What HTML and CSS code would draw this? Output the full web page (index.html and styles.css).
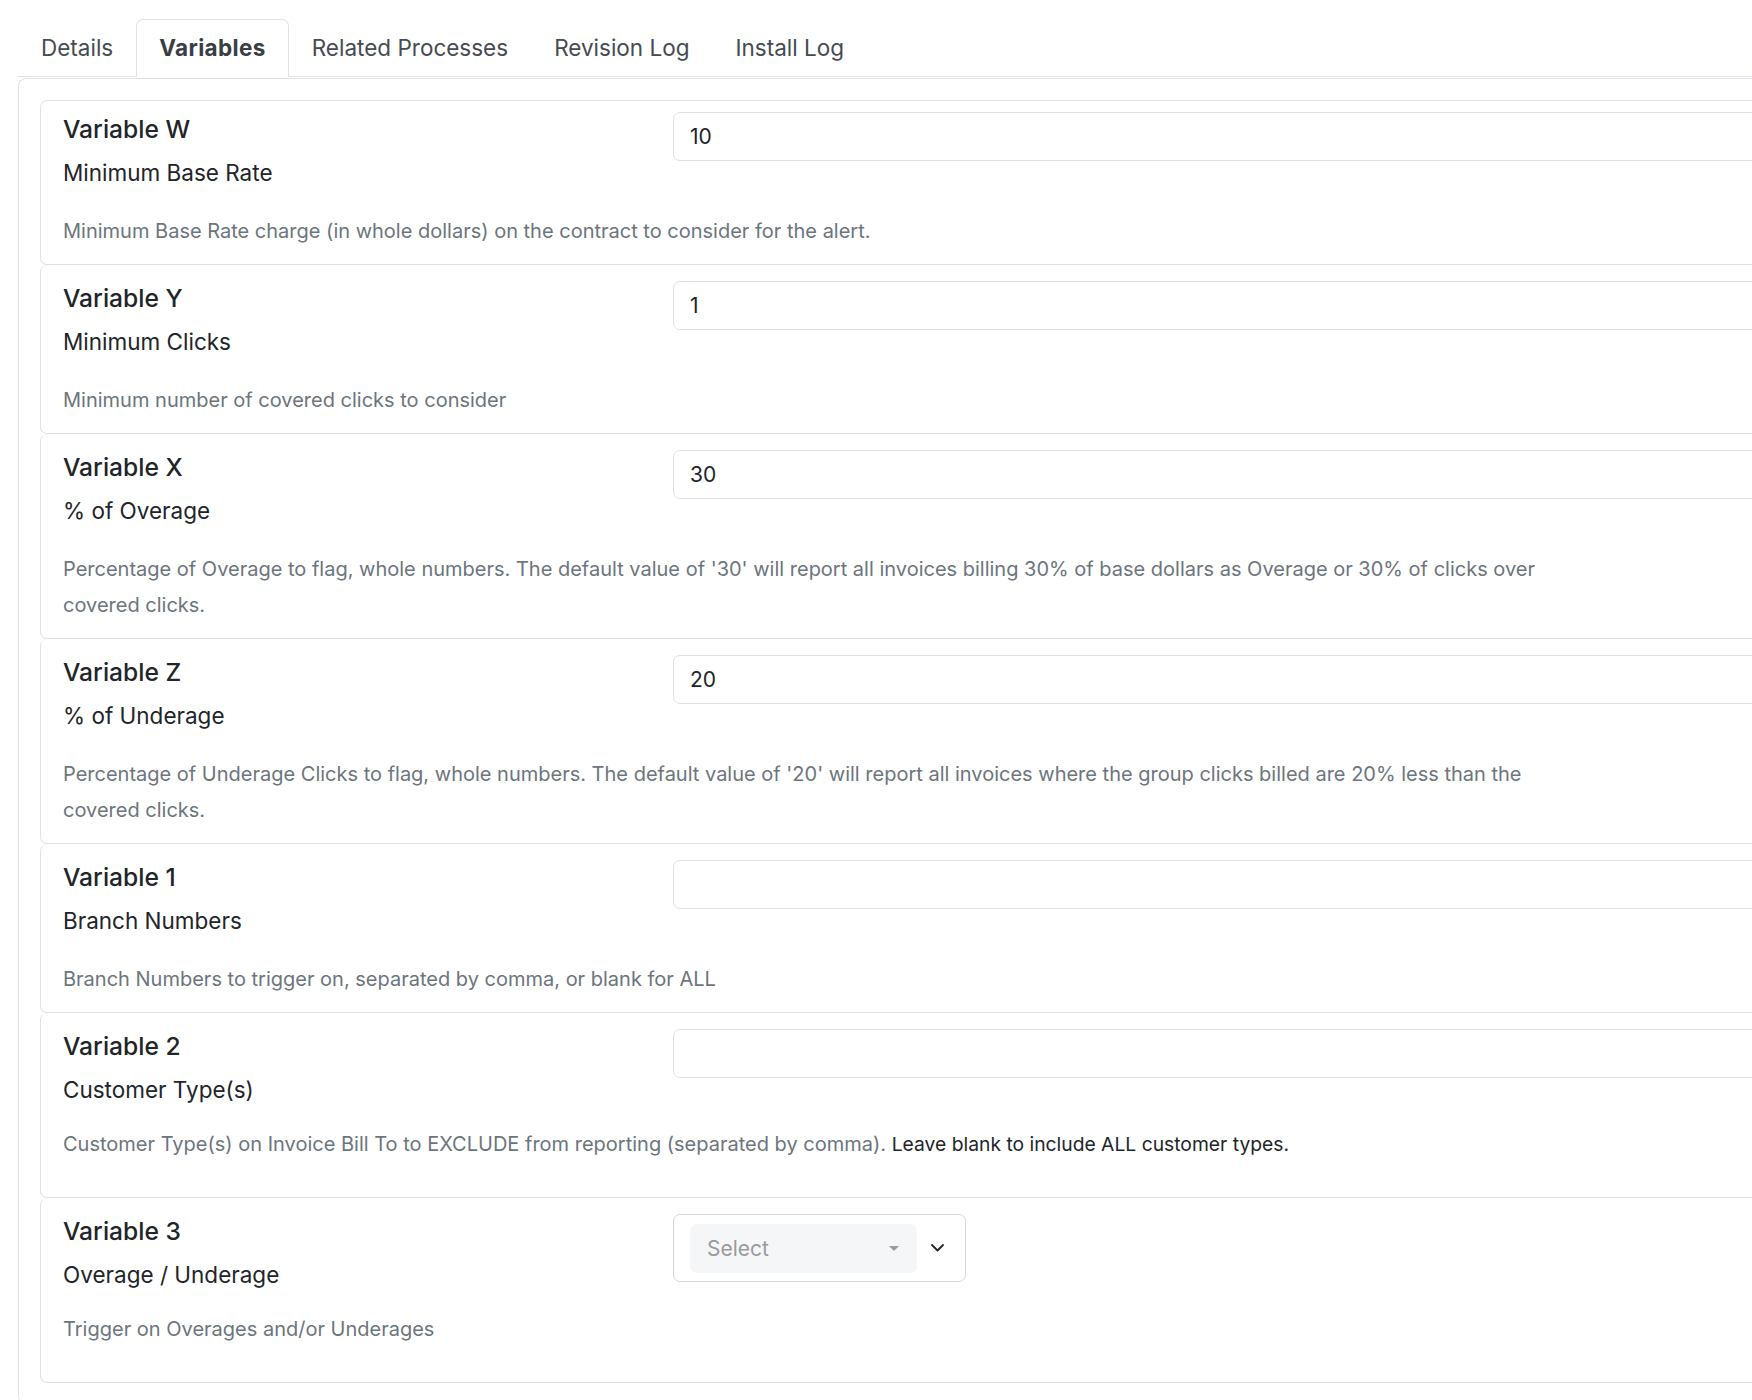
FILE: index.html
```html
<!DOCTYPE html>
<html lang="en">
<head>
<meta charset="utf-8">
<title>Variables</title>
<link rel="stylesheet" href="styles.css">
</head>
<body>
<div class="page">
  <ul class="tabs">
    <li class="tab">Details</li>
    <li class="tab active">Variables</li>
    <li class="tab">Related Processes</li>
    <li class="tab">Revision Log</li>
    <li class="tab">Install Log</li>
  </ul>
  <div class="panel">
    <div class="var-card">
      <div class="var-row">
        <div class="var-names">
          <div class="var-title">Variable W</div>
          <div class="var-label">Minimum Base Rate</div>
        </div>
        <div class="field"><input class="text-input" type="text" value="10"></div>
      </div>
      <p class="var-desc">Minimum Base Rate charge (in whole dollars) on the contract to consider for the alert.</p>
    </div>

    <div class="var-card">
      <div class="var-row">
        <div class="var-names">
          <div class="var-title">Variable Y</div>
          <div class="var-label">Minimum Clicks</div>
        </div>
        <div class="field"><input class="text-input" type="text" value="1"></div>
      </div>
      <p class="var-desc">Minimum number of covered clicks to consider</p>
    </div>

    <div class="var-card">
      <div class="var-row">
        <div class="var-names">
          <div class="var-title">Variable X</div>
          <div class="var-label">% of Overage</div>
        </div>
        <div class="field"><input class="text-input" type="text" value="30"></div>
      </div>
      <p class="var-desc">Percentage of Overage to flag, whole numbers. The default value of '30' will report all invoices billing 30% of base dollars as Overage or 30% of clicks over covered clicks.</p>
    </div>

    <div class="var-card">
      <div class="var-row">
        <div class="var-names">
          <div class="var-title">Variable Z</div>
          <div class="var-label">% of Underage</div>
        </div>
        <div class="field"><input class="text-input" type="text" value="20"></div>
      </div>
      <p class="var-desc">Percentage of Underage Clicks to flag, whole numbers. The default value of '20' will report all invoices where the group clicks billed are 20% less than the covered clicks.</p>
    </div>

    <div class="var-card">
      <div class="var-row">
        <div class="var-names">
          <div class="var-title">Variable 1</div>
          <div class="var-label">Branch Numbers</div>
        </div>
        <div class="field"><input class="text-input" type="text" value=""></div>
      </div>
      <p class="var-desc">Branch Numbers to trigger on, separated by comma, or blank for ALL</p>
    </div>

    <div class="var-card tall">
      <div class="var-row">
        <div class="var-names">
          <div class="var-title">Variable 2</div>
          <div class="var-label">Customer Type(s)</div>
        </div>
        <div class="field"><input class="text-input" type="text" value=""></div>
      </div>
      <p class="var-desc">Customer Type(s) on Invoice Bill To to EXCLUDE from reporting (separated by comma). <span class="dark">Leave blank to include ALL customer types.</span></p>
    </div>

    <div class="var-card tall">
      <div class="var-row">
        <div class="var-names">
          <div class="var-title">Variable 3</div>
          <div class="var-label">Overage / Underage</div>
        </div>
        <div class="field">
          <div class="select-box">
            <div class="select-inner">
              <span class="select-placeholder">Select</span>
              <svg class="caret" width="10" height="5" viewBox="0 0 10 5"><path d="M0 0h10L5 5z" fill="#9a9a9a"/></svg>
            </div>
            <svg class="chevron" width="13" height="8" viewBox="0 0 13 8"><path d="M1 1l5.5 5.5L12 1" fill="none" stroke="#212529" stroke-width="1.8" stroke-linecap="round" stroke-linejoin="round"/></svg>
          </div>
        </div>
      </div>
      <p class="var-desc">Trigger on Overages and/or Underages</p>
    </div>
  </div>
</div>
</body>
</html>
```

FILE: styles.css
```css
html, body {
  margin: 0;
  padding: 0;
  background: #ffffff;
  overflow: hidden;
}

body {
  font-family: Inter, "Noto Sans", "Liberation Sans", sans-serif;
  color: #212529;
}

.page {
  width: 2200px;
  padding: 19px 0 0 18px;
}

.tabs {
  list-style: none;
  margin: 0;
  padding: 0;
  display: flex;
  border-bottom: 1px solid #dee2e6;
}

.tab {
  box-sizing: border-box;
  height: 58px;
  margin-bottom: -1px;
  padding: 0 22px;
  line-height: 56px;
  font-size: 22.5px;
  color: #454b51;
  border: 1px solid transparent;
  border-radius: 7px 7px 0 0;
}

.tab.active {
  font-weight: 700;
  letter-spacing: 0.35px;
  color: #383e44;
  background: #ffffff;
  border-color: #dee2e6 #dee2e6 #ffffff;
}

.panel {
  margin-top: 1px;
  border: 1px solid #dee2e6;
  border-right: 0;
  border-radius: 8px 0 0 8px;
  padding: 21px 0 20px 21px;
}

.var-card {
  border: 1px solid #dee2e6;
  border-top-width: 0;
  border-right: 0;
  border-radius: 7px 0 0 7px;
  padding: 16px 0 15px 22px;
}

.var-card:first-child {
  border-top-width: 1px;
  padding-top: 11px;
}

.var-card.tall {
  padding-bottom: 35px;
}

.var-row {
  display: grid;
  grid-template-columns: 610px 1fr;
  align-items: start;
}

.var-title {
  font-size: 24.6px;
  line-height: 34px;
  font-weight: 500;
  color: #212529;
}

.var-label {
  margin-top: 12px;
  font-size: 22.5px;
  line-height: 30px;
  color: #212529;
}

.var-desc {
  margin: 25px 0 0;
  max-width: 1510px;
  font-size: 20px;
  line-height: 36px;
  color: #6c757d;
}

.var-card.tall .var-desc {
  margin-top: 21px;
}

.var-desc .dark {
  font-size: 19.3px;
  color: #212529;
}

.text-input {
  display: block;
  box-sizing: border-box;
  width: 100%;
  height: 49px;
  margin: 0;
  padding: 0 16px;
  border: 1px solid #dee2e6;
  border-radius: 7px;
  font-family: Inter, "Noto Sans", "Liberation Sans", sans-serif;
  font-size: 21px;
  color: #212529;
  background: #ffffff;
  outline: none;
}

.select-box {
  box-sizing: border-box;
  width: 293px;
  height: 68px;
  padding-left: 16px;
  border: 1px solid #d3d7dc;
  border-radius: 7px;
  display: flex;
  align-items: center;
}

.select-inner {
  box-sizing: border-box;
  width: 227px;
  height: 49px;
  padding: 0 18px 0 17px;
  background: #f5f6f8;
  border-radius: 7px;
  display: flex;
  align-items: center;
  justify-content: space-between;
}

.select-placeholder {
  font-size: 21px;
  color: #9a9a9a;
}

.caret {
  display: block;
}

.chevron {
  display: block;
  margin-left: 14px;
}
```
